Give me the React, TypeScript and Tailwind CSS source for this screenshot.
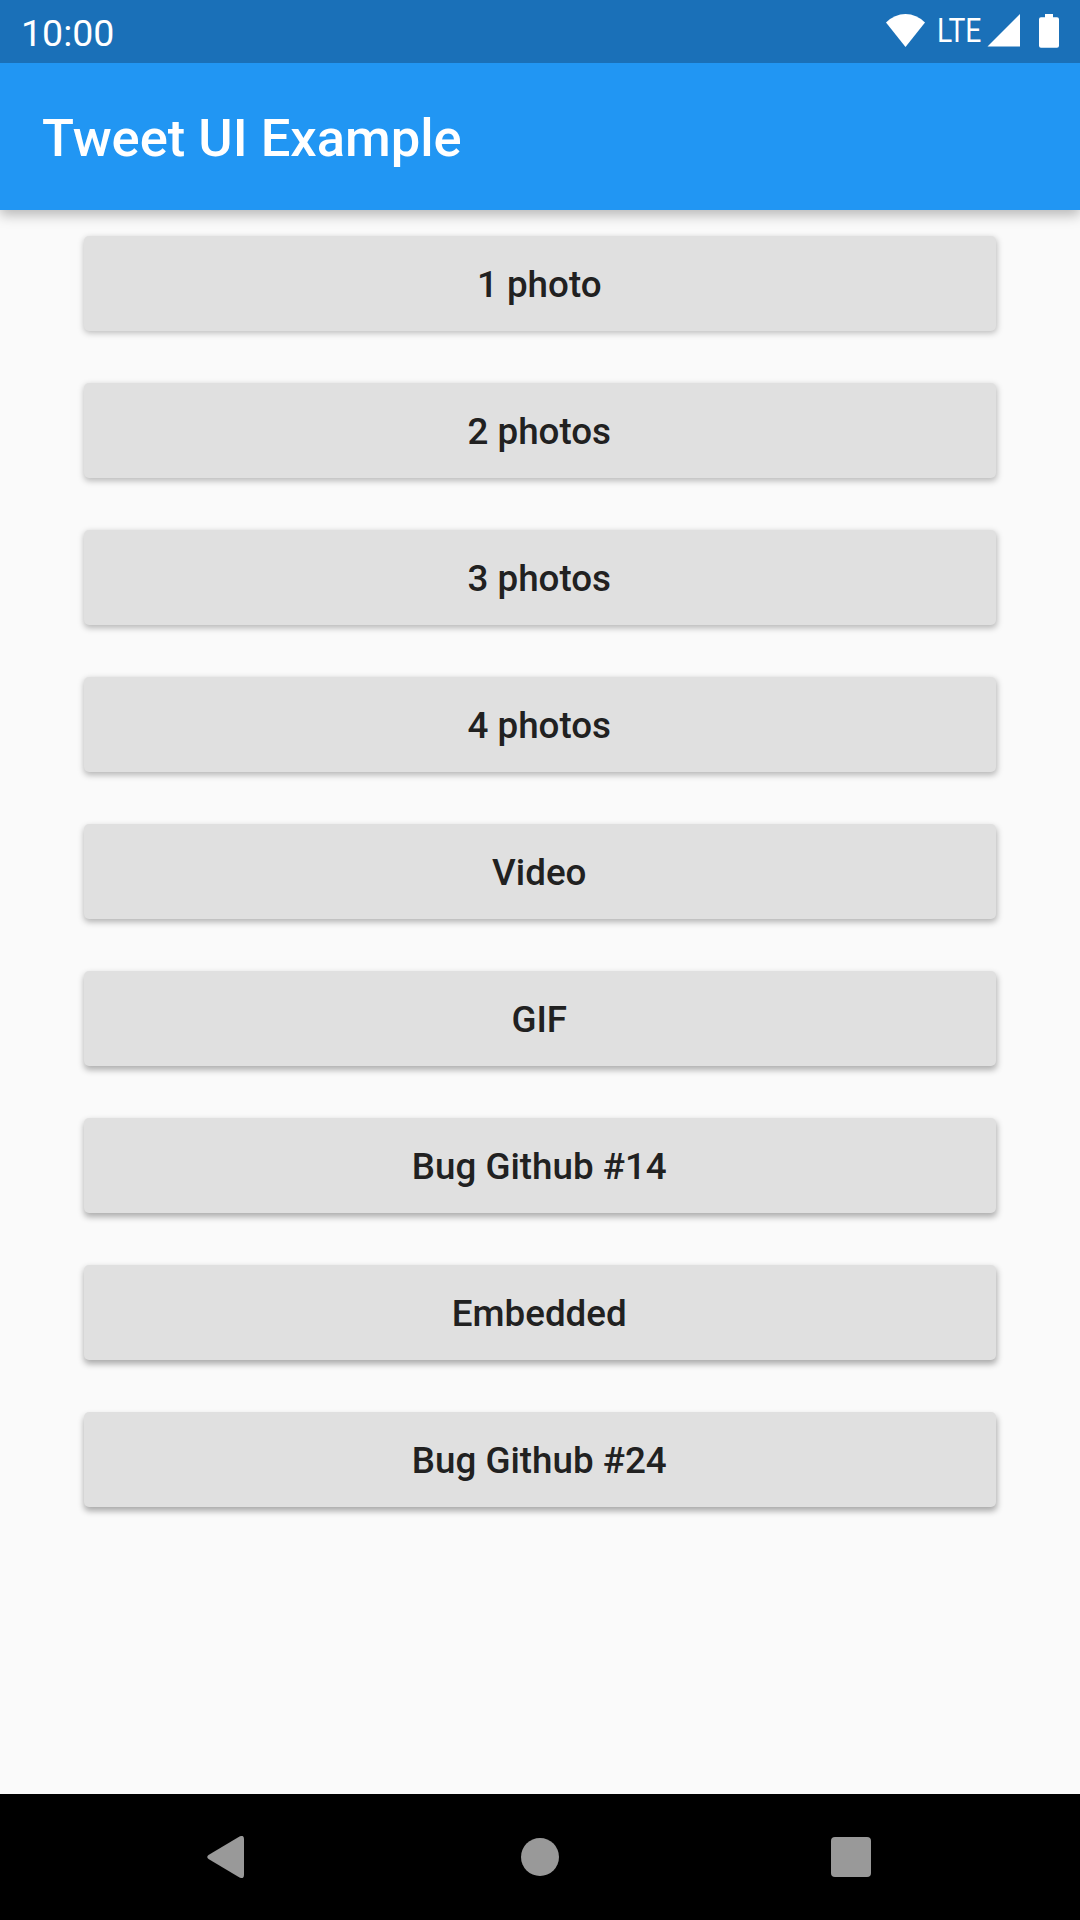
const labels = ['1 photo', '2 photos', '3 photos', '4 photos', 'Video', 'GIF', 'Bug Github #14', 'Embedded', 'Bug Github #24'];

function StatusBar() {
  return (
    <div className="relative z-10 flex h-[63px] shrink-0 items-start justify-between bg-[#1a70b8] pl-[21px] pr-[21px] text-white">
      <span className="mt-[14px] text-[37.5px] leading-[38px]">10:00</span>
      <div className="flex items-start pt-[14px]">
        <svg className="h-[33px] w-[39px]" viewBox="0 0 39 33" fill="currentColor"><path d="M19.5 33 0 8.5Q8.5 0 19.5 0T39 8.5Z" /></svg>
        <span className="ml-[12px] mt-px w-[49px] origin-left scale-x-[0.87] text-[32.5px] leading-[33px]">LTE</span>
        <svg className="ml-px h-[33px] w-[33px]" viewBox="0 0 33 33" fill="currentColor"><path d="M33 0V32.5H.5Z" /></svg>
        <svg className="ml-[19px] h-[34px] w-[20px]" viewBox="0 0 20 34" fill="currentColor"><path d="M6 0h8v3.2h4q2 0 2 2v26.5q0 2-2 2H2q-2 0-2-2V5.2q0-2 2-2h4Z" /></svg>
      </div>
    </div>
  );
}

export default function App() {
  return (
    <div className="flex h-[1920px] w-[1080px] flex-col overflow-hidden bg-[#fafafa] font-['Roboto',sans-serif]">
      <StatusBar />
      <header className="flex h-[147px] shrink-0 items-center bg-[#2196f3] pl-[42px] pt-[4px] text-white shadow-[0_5px_12px_rgba(0,0,0,0.27)]">
        <h1 className="text-[52.5px] font-medium leading-none">Tweet UI Example</h1>
      </header>
      <main className="flex grow flex-col gap-[52px] px-[84px] pt-[26px]">
        {labels.map((label, i) => (
          <button
            key={label}
            className="h-[95px] shrink-0 rounded-[5px] bg-[#e0e0e0] pr-[1.5px] pt-[3px] text-[36.75px] font-medium leading-none text-[#212121]"
            style={{ boxShadow: `0.5px ${2 + i * 0.25}px 6px rgba(0,0,0,${0.25 + i * 0.01})` }}
          >
            {label}
          </button>
        ))}
      </main>
      <nav className="flex h-[126px] shrink-0 items-center bg-black text-[#999]">
        <svg className="ml-[207px] h-[42px] w-[37px]" viewBox="0 0 37 42" fill="currentColor"><path d="M32.5.5Q37-1.5 37 3V39Q37 43.5 32.5 41.5L1.5 23Q-1 21 1.5 19Z" /></svg>
        <div className="ml-[277px] size-[38px] rounded-full bg-[#999]" />
        <div className="ml-[272px] size-10 rounded-[4px] bg-[#999]" />
      </nav>
    </div>
  );
}
